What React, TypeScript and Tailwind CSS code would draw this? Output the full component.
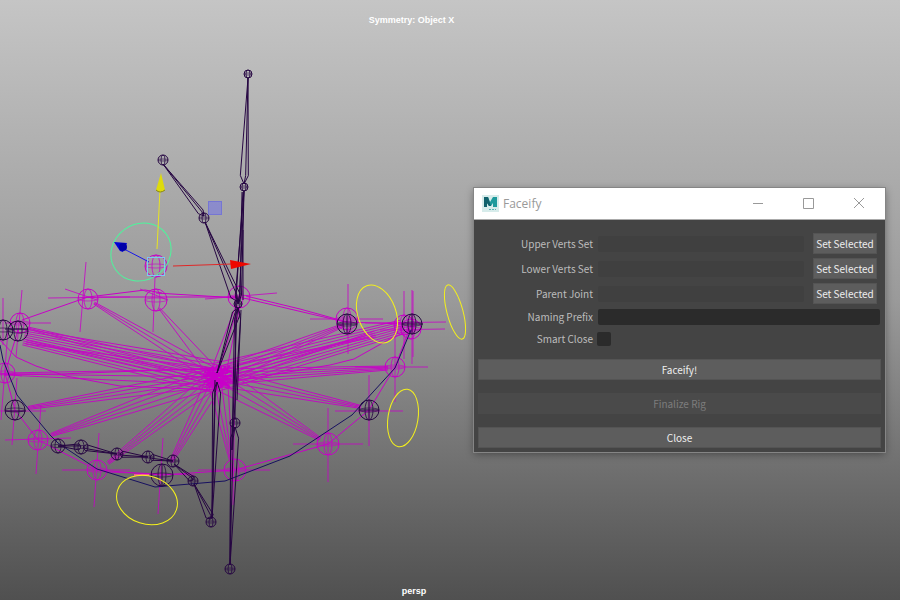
import React from "react";

type Joint = [x: number, y: number, r: number];

const controlJoints: Joint[] = [
  [88, 299, 10], [156, 300, 11], [156, 266, 11], [239, 297, 11], [20, 323, 10],
  [5, 373, 10], [38, 440, 10], [97, 470, 10], [235, 470, 11], [328, 444, 11],
  [395, 367, 10], [347, 319, 11], [404, 325, 10], [411, 329, 10],
];

const lipJoints: Joint[] = [
  [18, 331, 10], [3, 330, 10], [15, 410, 10], [162, 475, 11],
  [369, 410, 10], [347, 324, 10], [412, 324, 10],
];

const smallJoints: Joint[] = [
  [58, 446, 7], [81, 447, 7], [117, 454, 6], [148, 457, 6], [173, 461, 6],
  [193, 481, 5], [211, 522, 5], [230, 569, 5], [235, 423, 5], [204, 218, 5],
  [163, 160, 5], [248, 74, 4], [244, 187, 4], [238, 304, 4],
];

// End points of the rays that leave the hub, the number of strands in each
// and the distance between strands at the hub and at the far end.
const rays: [x: number, y: number, strands: number, hubGap: number, endGap: number][] = [
  [24, 337, 9, 4, 2], [28, 328, 3, 7, 1], [26, 342, 3, -8, 2], [5, 374, 3, 8, 1],
  [28, 408, 4, 6, 1], [51, 435, 4, 7, 1], [108, 463, 4, 6, 1], [171, 462, 4, 6, 1],
  [231, 460, 4, 7, 1], [320, 439, 4, 8, 1], [361, 407, 4, 6, 1], [388, 368, 5, 4, 1],
  [402, 327, 8, 4, 2], [344, 325, 4, 6, 1], [375, 334, 4, -6, 2],
  [94, 303, 3, 7, 1], [159, 308, 2, 12, 1], [238, 306, 3, 8, 2],
];

// Each bone runs from its root joint, where it is widest, to its tip.
const bones: [number, number, number, number, number][] = [
  [244, 184, 248, 78, 4], [238, 304, 244, 191, 3], [204, 216, 163, 164, 3],
  [238, 302, 205, 222, 5], [238, 308, 217, 373, 4], [238, 308, 232, 450, 3],
  [217, 382, 212, 518, 4], [235, 427, 230, 565, 4], [81, 447, 58, 446, 3],
  [83, 447, 117, 454, 3], [120, 454, 148, 457, 3], [150, 457, 173, 461, 3],
  [193, 480, 174, 464, 3], [211, 519, 194, 484, 4],
];

function Sphere({ joint: [x, y, r] }: { joint: Joint }) {
  const inner = Math.round(r * 0.4);
  return (
    <g>
      <circle cx={x} cy={y} r={r} />
      <ellipse cx={x} cy={y} rx={inner} ry={r} opacity=".8" />
      <ellipse cx={x} cy={y} rx={r} ry={inner / 2} opacity=".6" />
    </g>
  );
}

function Bone({ x1, y1, x2, y2, w }: { x1: number; y1: number; x2: number; y2: number; w: number }) {
  const length = Math.hypot(x2 - x1, y2 - y1);
  const nx = (-(y2 - y1) / length) * w;
  const ny = ((x2 - x1) / length) * w;
  const bx = x1 + (x2 - x1) * 0.08;
  const by = y1 + (y2 - y1) * 0.08;
  return (
    <path
      d={`M${x1} ${y1}L${bx + nx} ${by + ny}L${x2} ${y2}L${bx - nx} ${by - ny}ZL${bx + nx / 3} ${by + ny / 3}L${x2} ${y2}`}
    />
  );
}

function Scene() {
  return (
    <svg className="absolute top-0 left-0" width="900" height="600" viewBox="0 0 900 600" fill="none" aria-hidden="true">
      <g stroke="#c800c8" strokeWidth="1">
        <g opacity=".9">
          {rays.map(([x, y, strands, hubGap, endGap], ray) =>
            Array.from({ length: strands }, (_, i) => {
              const offset = i - (strands - 1) / 2;
              const dx = x - 217;
              const dy = y - 377;
              const length = Math.hypot(dx, dy);
              const nx = -dy / length;
              const ny = dx / length;
              return (
                <path
                  key={`${ray}-${i}`}
                  d={`M${217 + nx * offset * hubGap} ${377 + ny * offset * hubGap}L${x + nx * offset * endGap} ${y + ny * offset * endGap}`}
                />
              );
            }),
          )}
        </g>
        <path d="M205 368l24 18M204 372l27 7M203 376h29M204 382l26-11M209 388l17-22M217 365v25M206 374l24 13M211 367l12 20M206 386l24-20M208 370h20M207 373h21M207 379h22M208 383h19M213 366v22M221 366v22" strokeWidth="2" />
        <path d="M0 340L16 357L36 366L66 376L120 386L217 390M410 330L388 340L354 359L330 365L217 384M0 374H60L217 368" />
        <path d="M5 373L18 330M22 320L88 297L145 290L162 293M98 297H160L239 297L345 322L404 324M156 293L239 298M246 296L300 309L347 322M411 325L395 367L369 410L328 444L235 470L162 475L97 470L38 440L15 410L5 373" />
        <path d="M86 262L80 332M48 298L130 297M65 289L97 300M155 277L153 332M140 289L168 300M22 290L16 357M5 323H51M3 298V345M8 330L1 420M0 373L22 376M17 378L12 445M0 411H46M41 405L36 474M5 440L71 438M99 433L94 507M62 470H130M163 438L158 514M105 472L195 475M236 305L233 505M198 470H270M328 408V482M293 444H363M369 375V446M335 411H403M395 322V402M355 367H428M348 284V354M310 319H383M404 291V359M412 290V364M413 291V357M365 323L446 322M380 330L445 329M205 299L277 293" opacity=".8" />
        {controlJoints.map((joint, i) => <Sphere key={i} joint={joint} />)}
      </g>

      <path d="M0 345L3 360L17 395L30 411L50 435L58 443L97 469L155 487L225 481L290 456L352 415L395 368L411 330" stroke="#171060" />

      <g stroke="#260642" strokeWidth="1">
        {bones.map(([x1, y1, x2, y2, w], i) => <Bone key={i} x1={x1} y1={y1} x2={x2} y2={y2} w={w} />)}
        <path d="M236 295L235 420M242 192L240 300M241 310L237 400M243 192L236 298M243 230V300M215 380L212 518M231 425L230 565" />
        <path d="M5 329H28M338 324H357M402 324H423M347 315V333M412 315V333M369 401V419M5 411H26M359 410H379M162 465V485" />
        {lipJoints.map((joint, i) => <Sphere key={i} joint={joint} />)}
        {smallJoints.map((joint, i) => <Sphere key={i} joint={joint} />)}
      </g>
      <path d="M134 475H149" stroke="#f05a91" strokeWidth="2" />

      <g stroke="#f4f01c">
        <ellipse cx="377" cy="314" rx="19" ry="30" transform="rotate(-20 377 314)" />
        <ellipse cx="455" cy="312" rx="8" ry="28" transform="rotate(-15 455 312)" />
        <ellipse cx="403" cy="418" rx="15" ry="29" transform="rotate(9 403 418)" />
        <ellipse cx="147" cy="500" rx="31" ry="24" transform="rotate(18 147 500)" />
      </g>

      <ellipse cx="141" cy="252" rx="31" ry="28" transform="rotate(-35 141 252)" stroke="#4df59c" />
      <path d="M157 249L160 190" stroke="#e9e421" />
      <path d="M161 173L156 190Q160 194 165 190Z" fill="#dedb0c" />
      <path d="M156 190Q160 194 165 190" stroke="#8a8710" />
      <path d="M149 262L124 249" stroke="#1818e8" />
      <path d="M114 242L127 243L123 252L120 251Z" fill="#0000d8" />
      <circle cx="123" cy="247" r="4" fill="#0000a8" />
      <path d="M173 266L232 264" stroke="#e02828" />
      <path d="M230 260L251 264L231 269Z" fill="#ee0800" />
      <rect x="208.5" y="201.5" width="13" height="13" fill="#8585d5" fillOpacity=".8" stroke="#7575d4" />
      <rect x="147.500" y="257.500" width="17" height="18" stroke="#7cc8f4" />
    </svg>
  );
}

function MayaIcon() {
  return (
    <svg width="17" height="17" viewBox="0 0 17 17" aria-hidden="true">
      <rect width="17" height="17" fill="#d7eceb" />
      <path d="M2 2H6L8 7L11 2H15V12H11V8L9 11H7L5 8V12H2Z" fill="#1e9a9c" />
      <path d="M2 2H6L9 11H7L5 8V12H2Z" fill="#12616c" />
      <path d="M7 14.500H14" stroke="#58b3b3" strokeDasharray="2 1" />
    </svg>
  );
}

const fieldLabel = "w-[115px] shrink-0 text-right text-[#bdbdbd]";
const button = "border border-[#545454] bg-[#5d5d5d] text-[#eeeeee] whitespace-nowrap";
const wideButton = `${button} h-[21px] w-full`;

function VertexRow({ id, label }: { id: string; label: string }) {
  return (
    <div className="flex h-[21px] items-center">
      <label htmlFor={id} className={fieldLabel}>{label}</label>
      <input id={id} type="text" readOnly className="ml-[5px] h-4 min-w-0 flex-1 rounded-xs bg-[#404040] px-1 outline-none" />
      <button type="button" className={`${button} mr-1 ml-[9px] h-[21px] w-16 shrink-0`}>Set Selected</button>
    </div>
  );
}

function FaceifyDialog() {
  return (
    <section
      aria-label="Faceify"
      className="absolute top-[188px] left-[474px] w-[411px] bg-[#444444] font-['Noto_Sans_CJK_JP','Noto_Sans',sans-serif] text-[10px] leading-4 font-normal shadow-[0_2px_8px_rgba(0,0,0,0.4)] outline outline-[#858585]"
    >
      <header className="flex h-8 items-center border-b border-[#aaaaaa] bg-white pr-px pl-2 text-[#999999]">
        <MayaIcon />
        <h1 className="ml-1 flex-1 font-['Open_Sans',sans-serif] text-xs">Faceify</h1>
        <button type="button" aria-label="Minimize" className="flex h-full w-[51px] items-center justify-center">
          <svg width="12" height="12" stroke="currentColor"><path d="M1 5.500H11" /></svg>
        </button>
        <button type="button" aria-label="Maximize" className="flex h-full w-[50px] items-center justify-center">
          <svg width="12" height="12" fill="none" stroke="currentColor"><path d="M1.500 0.500H11.500V10.500H1.500Z" /></svg>
        </button>
        <button type="button" aria-label="Close window" className="flex h-full w-[51px] items-center justify-center">
          <svg width="12" height="12" stroke="currentColor"><path d="M1 0L11 10M11 0L1 10" /></svg>
        </button>
      </header>
      <form className="px-1 pt-[13px] pb-1" onSubmit={(event) => event.preventDefault()}>
        <div className="flex flex-col gap-1">
          <VertexRow id="upper" label="Upper Verts Set" />
          <VertexRow id="lower" label="Lower Verts Set" />
          <VertexRow id="parent" label="Parent Joint" />
          <div className="flex h-[18px] items-center">
            <label htmlFor="prefix" className={fieldLabel}>Naming Prefix</label>
            <input id="prefix" type="text" className="mr-px ml-[5px] h-4 min-w-0 flex-1 rounded-xs bg-[#2b2b2b] px-1 text-[#cccccc] outline-none" />
          </div>
          <div className="flex h-[18px] items-center">
            <label htmlFor="smart" className={fieldLabel}>Smart Close</label>
            <input id="smart" type="checkbox" className="ml-1 size-3.5 appearance-none rounded-xs bg-[#2b2b2b] checked:bg-[#888888]" />
          </div>
        </div>
        <div className="mt-[11px] flex flex-col gap-[13px]">
          <button type="submit" className={wideButton}>Faceify!</button>
          <button type="button" disabled className="h-[21px] w-full bg-[#4a4a4a] text-[#7d7d7d]">Finalize Rig</button>
          <button type="button" className={wideButton}>Close</button>
        </div>
      </form>
    </section>
  );
}

export default function App() {
  return (
    <main className="relative flex min-h-screen flex-col justify-between overflow-hidden bg-linear-to-b from-[#c5c5c5] via-[#9a9a9a] to-[#505050] font-['Liberation_Sans',Arial,sans-serif] text-[9px] leading-3 font-bold text-white">
      <Scene />
      <p className="relative w-[823px] max-w-full pt-[14px] text-center">Symmetry: Object X</p>
      <FaceifyDialog />
      <p className="relative w-[828px] max-w-full pb-[3px] text-center">persp</p>
    </main>
  );
}
